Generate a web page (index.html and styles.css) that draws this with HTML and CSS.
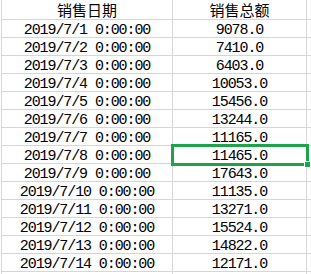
FILE: index.html
```html
<!DOCTYPE html>
<html lang="zh">
<head>
<meta charset="utf-8">
<link rel="stylesheet" href="styles.css">
</head>
<body>
<div class="sheet">
  <div class="cell head">销售日期</div><div class="cell head">销售总额</div><div class="cell"></div>
  <div class="cell">2019/7/1 0:00:00</div><div class="cell">9078.0</div><div class="cell"></div>
  <div class="cell">2019/7/2 0:00:00</div><div class="cell">7410.0</div><div class="cell"></div>
  <div class="cell">2019/7/3 0:00:00</div><div class="cell">6403.0</div><div class="cell"></div>
  <div class="cell">2019/7/4 0:00:00</div><div class="cell">10053.0</div><div class="cell"></div>
  <div class="cell">2019/7/5 0:00:00</div><div class="cell">15456.0</div><div class="cell"></div>
  <div class="cell">2019/7/6 0:00:00</div><div class="cell">13244.0</div><div class="cell"></div>
  <div class="cell">2019/7/7 0:00:00</div><div class="cell">11165.0</div><div class="cell"></div>
  <div class="cell">2019/7/8 0:00:00</div><div class="cell selected">11465.0<span class="handle"></span></div><div class="cell"></div>
  <div class="cell">2019/7/9 0:00:00</div><div class="cell">17643.0</div><div class="cell"></div>
  <div class="cell">2019/7/10 0:00:00</div><div class="cell">11135.0</div><div class="cell"></div>
  <div class="cell">2019/7/11 0:00:00</div><div class="cell">13271.0</div><div class="cell"></div>
  <div class="cell">2019/7/12 0:00:00</div><div class="cell">15524.0</div><div class="cell"></div>
  <div class="cell">2019/7/13 0:00:00</div><div class="cell">14822.0</div><div class="cell"></div>
  <div class="cell">2019/7/14 0:00:00</div><div class="cell">12171.0</div><div class="cell"></div>
  <div class="cell"></div><div class="cell"></div><div class="cell"></div>
</div>
</body>
</html>
```

FILE: styles.css
```css
html, body {
  margin: 0;
  padding: 0;
  background: #ffffff;
}
body {
  padding-left: 1px;
}
.sheet {
  display: grid;
  grid-template-columns: 170px 133px 5px;
  grid-template-rows: 19px repeat(14, 17px) 4px;
  gap: 1px;
  background: #d6d6d6;
  border-left: 1px solid #d6d6d6;
  width: 310px;
  height: 274px;
  overflow: hidden;
  box-sizing: border-box;
}
.cell {
  background: #ffffff;
  position: relative;
  text-align: center;
  font-family: "Liberation Mono", "Noto Sans CJK SC", monospace;
  font-size: 15px;
  letter-spacing: -1.1px;
  line-height: 15px;
  padding-top: 3px;
  box-sizing: border-box;
  color: #000000;
  white-space: nowrap;
}
.head {
  font-family: "Noto Sans CJK SC", sans-serif;
  font-size: 15px;
  letter-spacing: 0;
  line-height: 17px;
  padding-top: 1px;
}
.selected {
  z-index: 1;
}
.selected::after {
  content: "";
  position: absolute;
  top: -2px;
  left: -2px;
  right: -3px;
  bottom: -3px;
  border: 3px solid #1fa34a;
  pointer-events: none;
}
.handle {
  position: absolute;
  right: -5px;
  bottom: -5px;
  width: 5px;
  height: 5px;
  background: #1fa34a;
  border: 1px solid #ffffff;
  z-index: 2;
}
```
